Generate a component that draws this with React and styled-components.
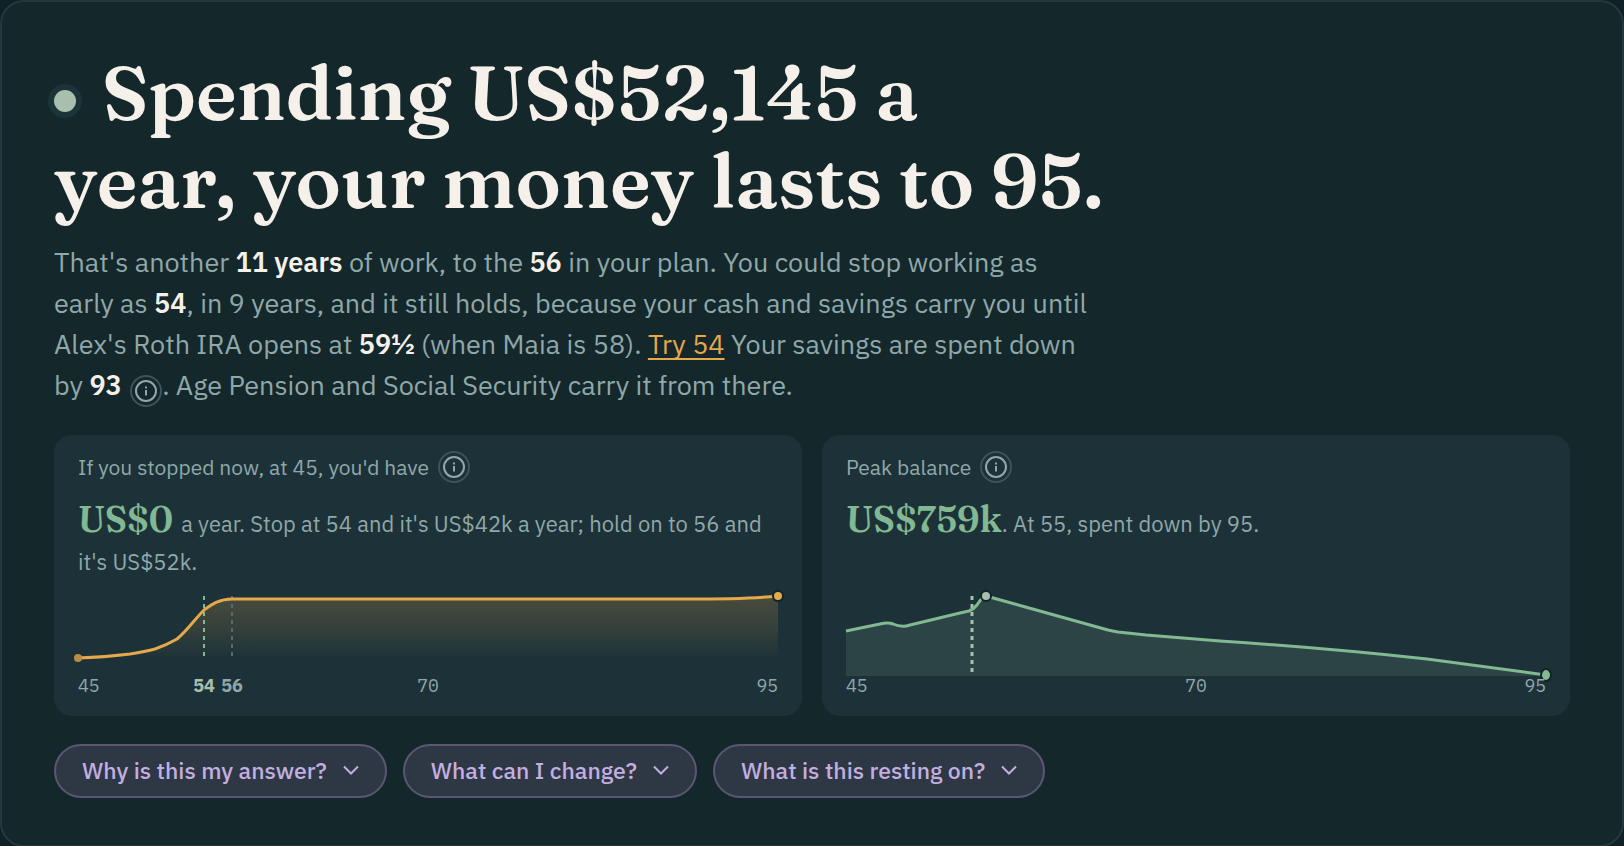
import React from "react";
import styled, { createGlobalStyle } from "styled-components";

const colors = {
  page: "#0f2126",
  card: "#14272b",
  cardLine: "#24393e",
  panel: "#1d3238",
  text: "#8fa8aa",
  bright: "#f5f1ea",
  amber: "#e5a84b",
  green: "#82b892",
  sage: "#a8bfae",
  lilac: "#c4aee0",
};

const questions = [
  "Why is this my answer?",
  "What can I change?",
  "What is this resting on?",
];

const spendLine =
  "M0 62 C20 61.500 36 60 52 58 C62 56.500 70 55 77 53 C86 50 92 47 99 43 C108 36 117 23 126 14 C133 9 141 3 154 3 L609 3 C650 3 680 2 700 0";

const balanceLine =
  "M0 35 L34 28 Q42 26 47 28 Q56 32 64 29 L114 17 L123 15 Q128 13 131 9 Q136 1 140 0 L262 34 Q266 35 272 36 L300 39 L374 45 Q480 52 581 63 L700 79";

const Info = ({ label }) => (
  <InfoBtn type="button" aria-label={label}>
    <svg width="24" height="24" viewBox="0 0 24 24" fill="none">
      <circle cx="12" cy="12" r="10" stroke="currentColor" strokeWidth="2" />
      <path d="M12 11V16.500M12 7.500V9.500" stroke="currentColor" strokeWidth="2" />
    </svg>
  </InfoBtn>
);

// zero length line with a round cap, keeps its shape when the chart stretches
const Dot = ({ x, y, color }) => (
  <>
    <DotLine d={`M${x} ${y}h0`} stroke="#10242a" strokeWidth="12" />
    <DotLine d={`M${x} ${y}h0`} stroke={color} strokeWidth="8" />
  </>
);

const SpendChart = () => (
  <Chart viewBox="0 0 700 80" preserveAspectRatio="none">
    <defs>
      <linearGradient id="spendFill" x1="0" y1="0" x2="0" y2="1">
        <stop offset="0" stopColor={colors.amber} stopOpacity="0.22" />
        <stop offset="0.500" stopColor={colors.amber} stopOpacity="0.12" />
        <stop offset="1" stopColor={colors.amber} stopOpacity="0" />
      </linearGradient>
    </defs>
    <path d={`${spendLine} V60 H0 Z`} fill="url(#spendFill)" />
    <Marker d="M126 0V60" stroke={colors.green} strokeWidth="2" />
    <Marker d="M154 0V60" stroke="#536a6e" strokeWidth="2" />
    <Line d={spendLine} stroke={colors.amber} />
    <DotLine d="M0 62h0" stroke="#b98d46" strokeWidth="8" />
    <Dot x={700} y={0} color={colors.amber} />
  </Chart>
);

const BalanceChart = () => (
  <Chart viewBox="0 0 700 80" preserveAspectRatio="none">
    <path d={`${balanceLine} V80 H0 Z`} fill="#2c4445" />
    <Marker d="M126 0V76" stroke={colors.sage} strokeWidth="3" />
    <Line d={balanceLine} stroke={colors.green} />
    <Dot x={140} y={0} color={colors.sage} />
    <ellipse cx="700" cy="79" rx="5" ry="6" fill={colors.green} stroke="#10242a" strokeWidth="2" />
  </Chart>
);

const App = () => {
  return (
    <>
      <GlobalStyle />
      <Card>
        <Title>
          <Status />
          Spending US$52,145 a year, your money lasts to 95.
        </Title>
        <Summary>
          That's another <strong>11 years</strong> of work, to the{" "}
          <strong>56</strong> in your plan. You could stop working as early as{" "}
          <strong>54</strong>, in 9 years, and it still holds, because your cash
          and savings carry you until Alex's Roth IRA opens at{" "}
          <strong>59½</strong> (when Maia is 58). <TryLink href="#try-54">Try 54</TryLink>{" "}
          Your savings are spent down by <strong>93</strong>{" "}
          <Info label="About when savings run down" />. Age Pension and Social
          Security carry it from there.
        </Summary>

        <Panels>
          <Panel>
            <PanelHead>
              If you stopped now, at 45, you'd have
              <Info label="About stopping now" />
            </PanelHead>
            <PanelText>
              <Amount>US$0 </Amount>a year. Stop at 54 and it's US$42k a year;
              hold on to 56 and it's US$52k.
            </PanelText>
            <SpendChart />
            <Axis>
              <Tick>45</Tick>
              <Tick $at={18} $bold $color={colors.sage}>54</Tick>
              <Tick $at={22} $bold>56</Tick>
              <Tick $at={50}>70</Tick>
              <Tick $end>95</Tick>
            </Axis>
          </Panel>
          <Panel>
            <PanelHead>
              Peak balance
              <Info label="About peak balance" />
            </PanelHead>
            <PanelText>
              <Amount>US$759k</Amount>. At 55, spent down by 95.
            </PanelText>
            <BalanceChart />
            <Axis>
              <Tick>45</Tick>
              <Tick $at={50}>70</Tick>
              <Tick $end>95</Tick>
            </Axis>
          </Panel>
        </Panels>

        <Questions>
          {questions.map((q) => (
            <Question type="button" key={q}>
              {q}
              <svg width="16" height="10" viewBox="0 0 16 10" fill="none">
                <path d="M1 1.500L8 8.500L15 1.500" stroke="currentColor" strokeWidth="2" />
              </svg>
            </Question>
          ))}
        </Questions>
      </Card>
    </>
  );
};

export default App;

const GlobalStyle = createGlobalStyle`
  * {
    box-sizing: border-box;
  }
  body {
    margin: 0;
    background: ${colors.page};
    color: ${colors.text};
    font-family: "IBM Plex Sans", Roboto, sans-serif;
  }
`;

const Card = styled.main`
  min-height: 100vh;
  padding: 47px 52px;
  background: ${colors.card};
  border: 2px solid ${colors.cardLine};
  border-radius: 24px;
`;

const Title = styled.h1`
  max-width: 1060px;
  margin: 0;
  color: ${colors.bright};
  font-family: Fraunces, "Liberation Serif", serif;
  font-size: 76px;
  font-weight: 600;
  line-height: 88px;
`;

const Status = styled.span`
  display: inline-block;
  width: 22px;
  height: 22px;
  margin-right: 26px;
  vertical-align: 8px;
  border-radius: 50%;
  background: ${colors.sage};
  box-shadow: 0 0 0 6px #1c3339;
`;

const Summary = styled.p`
  max-width: 1044px;
  margin: 16px 0 0;
  font-size: 27px;
  line-height: 41px;

  strong {
    color: ${colors.bright};
    font-weight: 600;
  }
`;

const TryLink = styled.a`
  color: ${colors.amber};
  text-decoration: underline;
  text-decoration-thickness: 2px;
  text-decoration-skip-ink: none;
  text-underline-offset: 4px;
`;

const InfoBtn = styled.button`
  display: inline-flex;
  align-items: center;
  justify-content: center;
  flex: none;
  width: 32px;
  height: 32px;
  margin-left: 2px;
  padding: 0;
  vertical-align: -8px;
  background: transparent;
  border: 2px solid #3d5458;
  border-radius: 50%;
  color: ${colors.text};

  svg {
    flex: none;
  }
`;

const Panels = styled.div`
  display: grid;
  grid-template-columns: 1fr 1fr;
  gap: 20px;
  margin-top: 28px;
  @media (max-width: 1000px) {
    grid-template-columns: 1fr;
  }
`;

const Panel = styled.section`
  display: flex;
  flex-direction: column;
  padding: 16px 24px;
  background: ${colors.panel};
  border-radius: 18px;
`;

const PanelHead = styled.div`
  display: flex;
  align-items: center;
  gap: 7px;
  font-size: 21px;
  line-height: 32px;
`;

const PanelText = styled.p`
  margin: 17px 0 15px;
  font-size: 22px;
  line-height: 38px;
`;

const Amount = styled.strong`
  color: ${colors.green};
  font-family: Fraunces, "Liberation Serif", serif;
  font-size: 36px;
  font-weight: 600;
  line-height: 38px;
`;

const Chart = styled.svg`
  display: block;
  width: 100%;
  height: 80px;
  margin-top: auto;
  overflow: visible;
`;

const Line = styled.path`
  fill: none;
  stroke-width: 3px;
  stroke-linejoin: round;
  vector-effect: non-scaling-stroke;
`;

const Marker = styled.path`
  stroke-dasharray: 4 4;
  vector-effect: non-scaling-stroke;
`;

const DotLine = styled.path`
  stroke-linecap: round;
  vector-effect: non-scaling-stroke;
`;

const Axis = styled.div`
  position: relative;
  height: 24px;
`;

// axis ages sit at their share of the 45-95 span
const Tick = styled.span`
  position: absolute;
  left: ${({ $at, $end }) => ($end ? "auto" : `${$at || 0}%`)};
  right: ${({ $end }) => ($end ? "0" : "auto")};
  transform: ${({ $at }) => ($at ? "translateX(-50%)" : "none")};
  color: ${({ $color }) => $color || colors.text};
  font-family: "IBM Plex Mono", "Liberation Mono", monospace;
  font-size: 18px;
  font-weight: ${({ $bold }) => ($bold ? 700 : 400)};
  line-height: 20px;
`;

const Questions = styled.div`
  display: flex;
  flex-wrap: wrap;
  gap: 16px;
  margin-top: 28px;
`;

const Question = styled.button`
  display: inline-flex;
  align-items: center;
  gap: 16px;
  height: 54px;
  padding: 0 26px 2px;
  background: #2d3844;
  border: 2px solid #5b5773;
  border-radius: 27px;
  color: ${colors.lilac};
  font-family: inherit;
  font-size: 23px;
  font-weight: 500;
`;
